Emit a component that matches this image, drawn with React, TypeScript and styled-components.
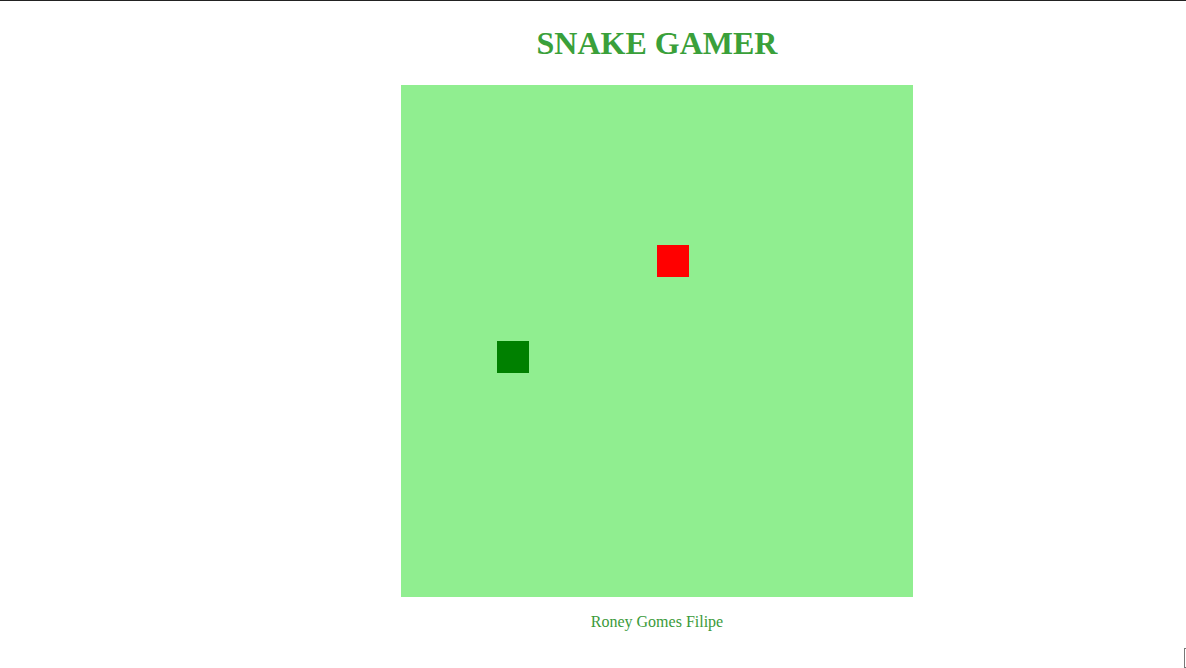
import React from 'react';
import styled, { createGlobalStyle } from 'styled-components';

const CELL = 32;
const BOARD = 512;

const GlobalStyle = createGlobalStyle`
    html, body {
        margin: 0;
        padding: 0;
        background: #ffffff;
    }
    body {
        font-family: "Liberation Serif", "Times New Roman", serif;
    }
`;

const StyledPage = styled.div`
    border-top: 1px solid #222222;
    box-sizing: border-box;
    display: flex;
    flex-direction: column;
    align-items: center;
    min-height: 668px;
    padding-left: 128px;
    position: relative;
`;

const StyledTitle = styled.h1`
    color: #3aa03a;
    font-size: 32px;
    font-weight: bold;
    margin: 24px 0 23px 0;
`;

const StyledBoard = styled.div`
    background: #90ee90;
    height: ${BOARD}px;
    position: relative;
    width: ${BOARD}px;
`;

const StyledCell = styled.div<{ $color: string; $x: number; $y: number }>`
    background: ${props => props.$color};
    height: ${CELL}px;
    left: ${props => props.$x * CELL}px;
    position: absolute;
    top: ${props => props.$y * CELL}px;
    width: ${CELL}px;
`;

const StyledFooter = styled.p`
    color: #3a9a3a;
    font-size: 16px;
    margin: 16px 0 0 0;
`;

const StyledCorner = styled.div`
    border: 1px solid #777777;
    border-right: none;
    height: 18px;
    left: 1184px;
    position: absolute;
    top: 647px;
    width: 10px;
`;

const snake = [{ x: 3, y: 8 }];
const food = { x: 8, y: 5 };

export default function App() {
    return <>
        <GlobalStyle />
        <StyledPage>
            <StyledTitle>SNAKE GAMER</StyledTitle>
            <StyledBoard>
                <StyledCell $color="#ff0000" $x={food.x} $y={food.y} />
                {
                    snake.map((part, i) =>
                        <StyledCell key={i} $color="#008000" $x={part.x} $y={part.y} />
                    )
                }
            </StyledBoard>
            <StyledFooter>Roney Gomes Filipe</StyledFooter>
            <StyledCorner />
        </StyledPage>
    </>
}
